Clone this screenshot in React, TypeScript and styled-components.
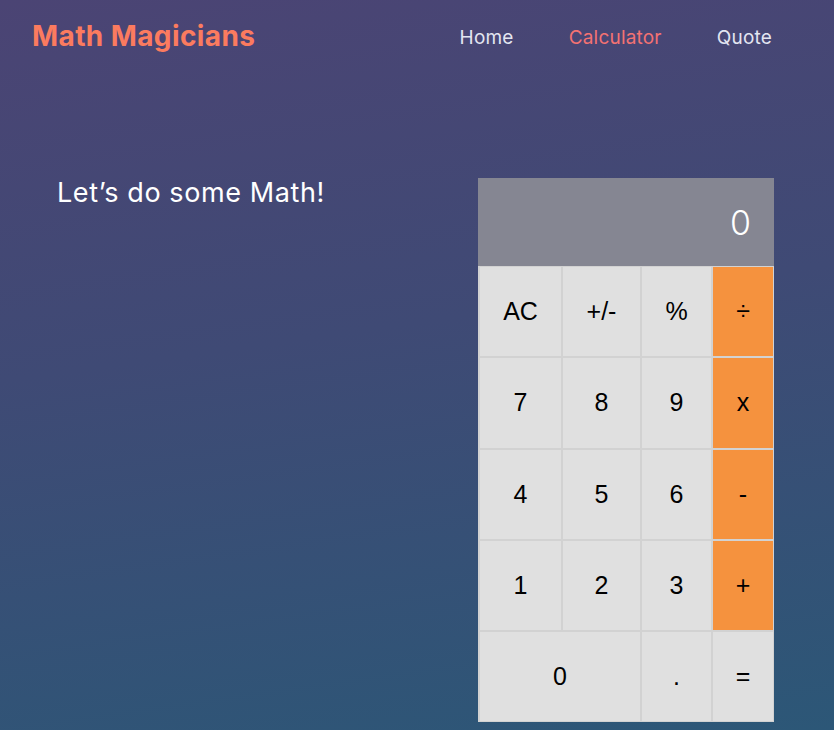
import React from 'react';
import styled, { createGlobalStyle } from 'styled-components';

const Global = createGlobalStyle`
  html, body { margin: 0; padding: 0; }
  body {
    font-family: Inter, "Noto Sans", sans-serif;
    background: linear-gradient(172deg, #4b4474 0%, #3f4a75 45%, #2c5777 100%);
    min-height: 730px;
  }
`;

const Page = styled.div`
  min-height: 730px;
  display: flex;
  flex-direction: column;
`;

const Header = styled.header`
  display: flex;
  align-items: center;
  justify-content: space-between;
  height: 72px;
  padding: 0 62px 0 32px;
`;

const Logo = styled.h1`
  margin: 0;
  font-size: 28px;
  font-weight: 700;
  color: #fb7b5f;
  letter-spacing: 0.4px;
`;

const Nav = styled.nav`
  display: flex;
  gap: 55px;
  padding-top: 2px;
`;

const NavLink = styled.a<{ $active?: boolean }>`
  font-size: 19px;
  font-weight: 400;
  letter-spacing: 0.2px;
  color: ${(p) => (p.$active ? '#f47272' : '#e3e5f1')};
  text-decoration: none;
`;

const Main = styled.main`
  display: flex;
  justify-content: space-between;
  align-items: flex-start;
  padding: 106px 60px 0 57px;
`;

const Intro = styled.h2`
  margin: 0;
  font-size: 27px;
  font-weight: 400;
  letter-spacing: 0.6px;
  color: #ffffff;
  line-height: 30px;
`;

const Calc = styled.div`
  width: 296px;
  display: flex;
  flex-direction: column;
  background: #d2d2d2;
`;

const Display = styled.div`
  height: 88px;
  background: #858692;
  color: #ffffff;
  display: flex;
  align-items: center;
  justify-content: flex-end;
  padding-right: 23px;
  font-size: 34px;
  font-weight: 300;
  margin-bottom: 1px;
`;

const Keys = styled.div`
  display: grid;
  grid-template-columns: 81px 77px 69px 60px;
  grid-auto-rows: 89.25px;
  gap: 2px;
  padding: 0 1px 1px 2px;
`;

const Key = styled.button<{ $op?: boolean; $span?: number }>`
  border: none;
  margin: 0;
  padding: 0;
  background: ${(p) => (p.$op ? '#f5923e' : '#e0e0e0')};
  color: #000;
  font-family: "Liberation Sans", Arial, sans-serif;
  font-size: 25px;
  grid-column: span ${(p) => p.$span ?? 1};
  display: flex;
  align-items: center;
  justify-content: center;
  cursor: pointer;
`;

const keys: { label: string; op?: boolean; span?: number }[] = [
  { label: 'AC' }, { label: '+/-' }, { label: '%' }, { label: '÷', op: true },
  { label: '7' }, { label: '8' }, { label: '9' }, { label: 'x', op: true },
  { label: '4' }, { label: '5' }, { label: '6' }, { label: '-', op: true },
  { label: '1' }, { label: '2' }, { label: '3' }, { label: '+', op: true },
  { label: '0', span: 2 }, { label: '.' }, { label: '=' },
];

export default function App() {
  return (
    <>
      <Global />
      <Page>
        <Header>
          <Logo>Math Magicians</Logo>
          <Nav>
            <NavLink href="#">Home</NavLink>
            <NavLink href="#" $active>Calculator</NavLink>
            <NavLink href="#">Quote</NavLink>
          </Nav>
        </Header>
        <Main>
          <Intro>Let’s do some Math!</Intro>
          <Calc>
            <Display>0</Display>
            <Keys>
              {keys.map((k) => (
                <Key key={k.label} $op={k.op} $span={k.span}>{k.label}</Key>
              ))}
            </Keys>
          </Calc>
        </Main>
      </Page>
    </>
  );
}
